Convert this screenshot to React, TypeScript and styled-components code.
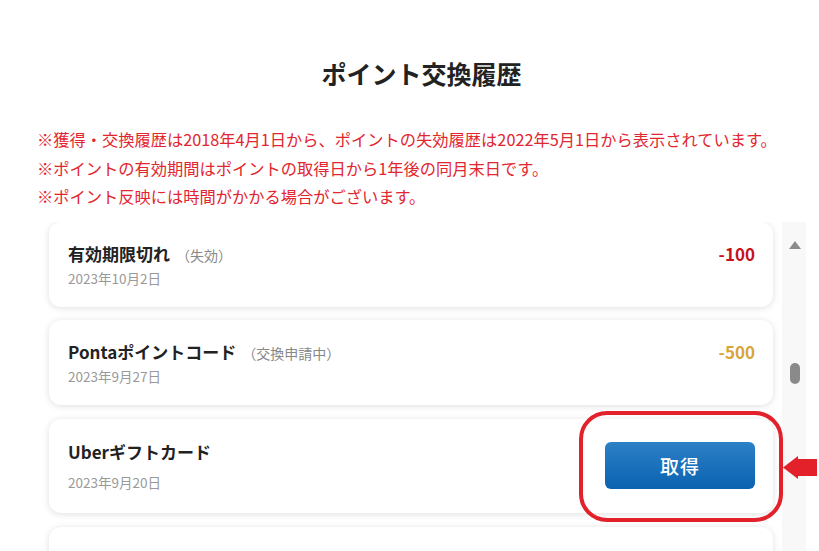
import React from 'react'
import styled, { createGlobalStyle } from 'styled-components'

const GlobalStyle = createGlobalStyle`
	html, body {
		margin: 0;
		padding: 0;
		background: #ffffff;
	}
	body {
		font-family: "Noto Sans CJK JP", "Noto Sans", sans-serif;
		color: #222;
	}
`

type HistoryItem = {
	title: string
	note?: string
	date: string
	amount?: string
	tone?: 'expired' | 'pending'
	action?: string
}

const items: HistoryItem[] = [
	{ title: '有効期限切れ', note: '（失効）', date: '2023年10月2日', amount: '-100', tone: 'expired' },
	{ title: 'Pontaポイントコード', note: '（交換申請中）', date: '2023年9月27日', amount: '-500', tone: 'pending' },
	{ title: 'Uberギフトカード', date: '2023年9月20日', action: '取得' },
	{ title: 'Pontaポイントコード', date: '2023年9月15日', amount: '-500', tone: 'pending' },
]

const App: React.FC = () => {
	return (
		<>
			<GlobalStyle />
			<Page>
				<Content>
					<Title>ポイント交換履歴</Title>
					<Notes>
						<li>※獲得・交換履歴は2018年4月1日から、ポイントの失効履歴は2022年5月1日から表示されています。</li>
						<li>※ポイントの有効期間はポイントの取得日から1年後の同月末日です。</li>
						<li>※ポイント反映には時間がかかる場合がございます。</li>
					</Notes>
					<ListSection>
						<Viewport>
							{items.map((item, i) => (
								<Card key={i} $action={!!item.action}>
									<Info $action={!!item.action}>
										<ItemTitle>
											{item.title}
											{item.note && <ItemNote>{item.note}</ItemNote>}
										</ItemTitle>
										<ItemDate>{item.date}</ItemDate>
									</Info>
									{item.action ? (
										<ActionButton>{item.action}</ActionButton>
									) : (
										<Amount $tone={item.tone}>{item.amount}</Amount>
									)}
								</Card>
							))}
						</Viewport>
						<Track>
							<UpArrow />
							<Thumb />
						</Track>
						<Highlight />
						<Pointer viewBox="0 0 34 23">
							<polygon points="0,11.5 15,0 15,3 34,3 34,20 15,20 15,23" fill="#e3212b" />
						</Pointer>
					</ListSection>
				</Content>
			</Page>
		</>
	)
}

const Page = styled.div`
	width: 819px;
	height: 551px;
	overflow: hidden;
`

const Content = styled.div`
	margin-left: 37px;
	width: 769px;
	display: flex;
	flex-direction: column;
`

const Title = styled.h1`
	margin: 0;
	padding-top: 55px;
	text-align: center;
	font-size: 25px;
	line-height: 36px;
	font-weight: 700;
	color: #222;
`

const Notes = styled.ul`
	list-style: none;
	margin: 34px 0 0;
	padding: 0;
	color: #e2262f;
	font-size: 16.25px;
	line-height: 28.5px;
	white-space: nowrap;
`

const ListSection = styled.div`
	position: relative;
	margin-top: 11px;
	display: flex;
	height: 330px;
`

const Viewport = styled.div`
	width: 724px;
	padding: 0 9px 0 12px;
	overflow: hidden;
	display: flex;
	flex-direction: column;
	gap: 13.7px;
`

const Card = styled.div<{ $action: boolean }>`
	flex-shrink: 0;
	display: flex;
	align-items: ${(p) => (p.$action ? 'center' : 'flex-start')};
	justify-content: space-between;
	padding: ${(p) => (p.$action ? '21px 18px 21px 19px' : '20px 18px 19px 19px')};
	background: #fff;
	border-radius: 12px;
	box-shadow: 0 1px 7px rgba(0, 0, 0, 0.13);
`

const Info = styled.div<{ $action: boolean }>`
	display: flex;
	flex-direction: column;
	justify-content: space-between;
	gap: 2px;
	height: ${(p) => (p.$action ? '52px' : 'auto')};
`

const ItemTitle = styled.div`
	font-size: 17px;
	line-height: 22px;
	font-weight: 700;
	color: #222;
	padding-top: 1px;
`

const ItemNote = styled.span`
	margin-left: 6px;
	font-size: 14px;
	font-weight: 400;
	color: #888;
`

const ItemDate = styled.div`
	font-size: 13.5px;
	line-height: 20px;
	color: #999;
`

const Amount = styled.div<{ $tone?: 'expired' | 'pending' }>`
	padding-top: 1px;
	font-size: 17px;
	line-height: 22px;
	font-weight: 700;
	color: ${(p) => (p.$tone === 'expired' ? '#c8101e' : '#d8a43c')};
`

const ActionButton = styled.button`
	width: 150px;
	height: 47px;
	border: none;
	border-radius: 6px;
	background: linear-gradient(180deg, #2c80c6 0%, #0a62b0 100%);
	color: #fff;
	font-family: inherit;
	font-size: 19px;
	font-weight: 500;
	letter-spacing: 1px;
	cursor: pointer;
`

const Track = styled.div`
	width: 24px;
	background: #f8f8f8;
	display: flex;
	flex-direction: column;
	align-items: center;
	padding-top: 19px;
`

const UpArrow = styled.div`
	width: 0;
	height: 0;
	border-left: 6px solid transparent;
	border-right: 6px solid transparent;
	border-bottom: 8px solid #8c8c8c;
	margin-left: 2px;
`

const Thumb = styled.div`
	margin-top: 114px;
	margin-left: 2px;
	width: 10px;
	height: 21px;
	border-radius: 5px;
	background: #8a8a8a;
`

const Highlight = styled.div`
	position: absolute;
	left: 542px;
	top: 189px;
	width: 204px;
	height: 111px;
	box-sizing: border-box;
	border: 4px solid #e3212b;
	border-radius: 28px;
	pointer-events: none;
`

const Pointer = styled.svg`
	position: absolute;
	left: 746px;
	top: 234px;
	width: 34px;
	height: 23px;
`

export default App
